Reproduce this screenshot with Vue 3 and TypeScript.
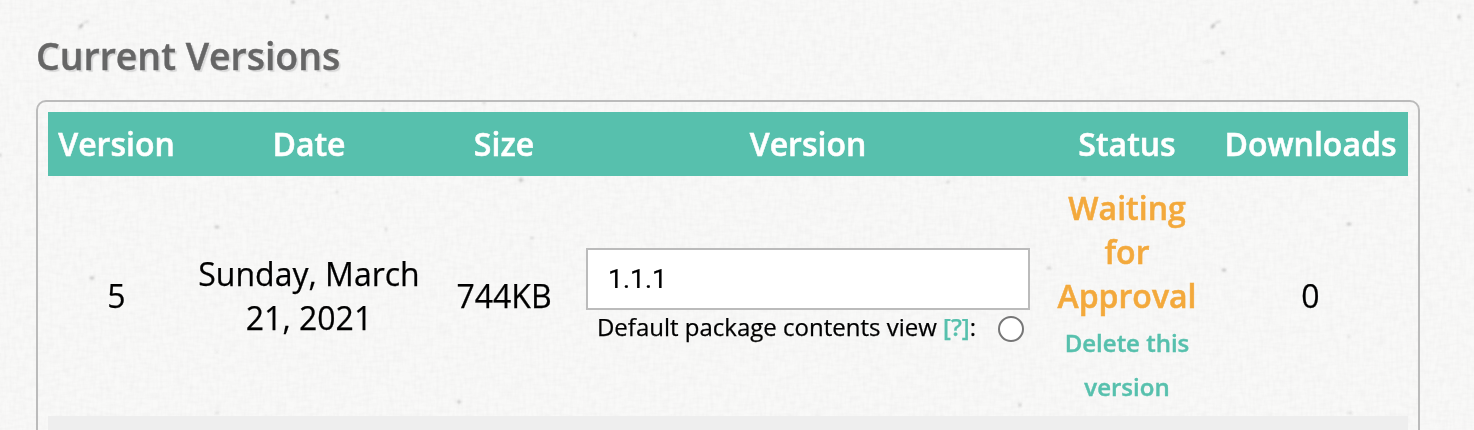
<script setup lang="ts">
interface VersionRow {
  id: number
  date: string
  size: string
  label: string
  status: string
  downloads: number
}

interface Speck {
  x: number
  y: number
  rx: number
  ry: number
  angle: number
  opacity: number
}

const columns: string[] = ['Version', 'Date', 'Size', 'Version', 'Status', 'Downloads']

const rows: VersionRow[] = [
  { id: 5, date: 'Sunday, March 21, 2021', size: '744KB', label: '1.1.1', status: 'Waiting for Approval', downloads: 0 },
]

const specks: Speck[] = [
  { x: 81, y: 26, rx: 3, ry: 1.4, angle: -50, opacity: 0.3 },
  { x: 86, y: 22, rx: 3, ry: 0.9, angle: -20, opacity: 0.18 },
  { x: 293, y: 2, rx: 2, ry: 1.6, angle: 0, opacity: 0.28 },
  { x: 327, y: 17, rx: 1.4, ry: 2.2, angle: 0, opacity: 0.28 },
  { x: 326, y: 85, rx: 1.8, ry: 1.6, angle: 0, opacity: 0.1 },
  { x: 635, y: 35, rx: 1.6, ry: 1.8, angle: 0, opacity: 0.1 },
  { x: 383, y: 110, rx: 1.6, ry: 1.6, angle: 0, opacity: 0.15 },
  { x: 1213, y: 26, rx: 3, ry: 1.4, angle: -50, opacity: 0.3 },
  { x: 1218, y: 22, rx: 3, ry: 0.9, angle: -20, opacity: 0.18 },
  { x: 1223, y: 53, rx: 1.8, ry: 1.8, angle: 0, opacity: 0.28 },
  { x: 1208, y: 62, rx: 6, ry: 0.8, angle: -10, opacity: 0.1 },
  { x: 1416, y: 2, rx: 2, ry: 1.6, angle: 0, opacity: 0.28 },
  { x: 1459, y: 17, rx: 1.4, ry: 2.2, angle: 0, opacity: 0.28 },
  { x: 1458, y: 85, rx: 1.8, ry: 1.6, angle: 0, opacity: 0.1 },
  { x: 0, y: 155, rx: 1.5, ry: 1.8, angle: 0, opacity: 0.2 },
  { x: 521, y: 180, rx: 2, ry: 2, angle: 0, opacity: 0.24 },
  { x: 484, y: 103, rx: 2, ry: 1.4, angle: 0, opacity: 0.12 },
  { x: 337, y: 192, rx: 1.8, ry: 1.8, angle: 0, opacity: 0.1 },
  { x: 217, y: 227, rx: 2.4, ry: 1.4, angle: 0, opacity: 0.24 },
  { x: 386, y: 229, rx: 1.6, ry: 1.6, angle: 0, opacity: 0.14 },
  { x: 532, y: 238, rx: 2, ry: 1.3, angle: 0, opacity: 0.18 },
  { x: 92, y: 278, rx: 2, ry: 1.5, angle: 0, opacity: 0.28 },
  { x: 459, y: 402, rx: 1.9, ry: 1.9, angle: 0, opacity: 0.2 },
  { x: 217, y: 352, rx: 1.6, ry: 1.3, angle: 0, opacity: 0.1 },
  { x: 217, y: 413, rx: 2.6, ry: 1.3, angle: 0, opacity: 0.12 },
  { x: 948, y: 182, rx: 2, ry: 1.5, angle: -30, opacity: 0.15 },
  { x: 1084, y: 179, rx: 2.4, ry: 1.6, angle: 0, opacity: 0.14 },
  { x: 1049, y: 268, rx: 2.4, ry: 1.6, angle: 0, opacity: 0.18 },
  { x: 1020, y: 405, rx: 1.5, ry: 1.9, angle: 0, opacity: 0.18 },
  { x: 1224, y: 270, rx: 2.2, ry: 1.5, angle: 0, opacity: 0.28 },
  { x: 1349, y: 224, rx: 2.6, ry: 1.5, angle: 0, opacity: 0.24 },
  { x: 1349, y: 337, rx: 1.8, ry: 1.3, angle: 0, opacity: 0.1 },
  { x: 1350, y: 413, rx: 2.6, ry: 1.3, angle: 0, opacity: 0.12 },
  { x: 1469, y: 190, rx: 2, ry: 1.6, angle: 0, opacity: 0.12 },
]
</script>

<template>
  <main class="page">
    <svg class="paper" width="1474" height="430" aria-hidden="true">
      <defs>
        <filter id="weave-v" x="0" y="0" width="100%" height="100%" color-interpolation-filters="sRGB">
          <feTurbulence type="fractalNoise" baseFrequency="0.3 0.08" numOctaves="2" seed="4" />
          <feColorMatrix values="0 0 0 0 0.75  0 0 0 0 0.74  0 0 0 0 0.75  0.16 0 0 0 -0.06" />
        </filter>
        <filter id="weave-h" x="0" y="0" width="100%" height="100%" color-interpolation-filters="sRGB">
          <feTurbulence type="fractalNoise" baseFrequency="0.08 0.3" numOctaves="2" seed="9" />
          <feColorMatrix values="0 0 0 0 0.75  0 0 0 0 0.74  0 0 0 0 0.75  0.16 0 0 0 -0.06" />
        </filter>
        <filter id="soft" x="-5%" y="-5%" width="110%" height="110%">
          <feGaussianBlur stdDeviation="0.8" />
        </filter>
      </defs>
      <rect width="1474" height="430" filter="url(#weave-v)" />
      <rect width="1474" height="430" filter="url(#weave-h)" />
      <g filter="url(#soft)" fill="#555">
        <ellipse
          v-for="(s, i) in specks"
          :key="i"
          :cx="s.x"
          :cy="s.y"
          :rx="s.rx"
          :ry="s.ry"
          :opacity="s.opacity * 1.2"
          :transform="`rotate(${s.angle} ${s.x} ${s.y})`"
        />
      </g>
    </svg>

    <h2 class="title">Current Versions</h2>

    <section class="panel">
      <table class="versions">
        <colgroup>
          <col class="c-id" />
          <col class="c-date" />
          <col class="c-size" />
          <col class="c-label" />
          <col class="c-status" />
          <col class="c-downloads" />
        </colgroup>
        <thead>
          <tr>
            <th v-for="(c, i) in columns" :key="i">{{ c }}</th>
          </tr>
        </thead>
        <tbody>
          <tr v-for="row in rows" :key="row.id">
            <td>{{ row.id }}</td>
            <td class="date">{{ row.date }}</td>
            <td>{{ row.size }}</td>
            <td class="edit">
              <input class="label-input" type="text" :value="row.label" />
              <div class="default-view">
                <span>Default package contents view <a class="help">[?]</a>:</span>
                <input class="radio" type="radio" name="default-view" />
              </div>
            </td>
            <td class="status">
              <strong class="waiting">{{ row.status }}</strong>
              <a class="delete">Delete this version</a>
            </td>
            <td>{{ row.downloads }}</td>
          </tr>
          <tr class="alt">
            <td colspan="6"></td>
          </tr>
        </tbody>
      </table>
    </section>
  </main>
</template>

<style>
body {
  margin: 0;
  overflow: hidden;
}
</style>

<style scoped>
.page {
  position: relative;
  box-sizing: border-box;
  width: 1474px;
  height: 430px;
  padding: 29px 54px 0 36px;
  overflow: hidden;
  background: #f9f9f8;
  color: #000;
  font-family: "Open Sans", "Noto Sans", sans-serif;
  font-size: 32px;
  line-height: 44px;
  -webkit-text-stroke: 0.25px currentColor;
}
.paper {
  position: absolute;
  inset: 0;
}
.title {
  position: relative;
  height: 54px;
  margin: 0 0 17px;
  color: #666;
  font-size: 37.44px;
  font-weight: 600;
  line-height: 54px;
  text-shadow: 2px 2px 1px #d8d8d8;
  -webkit-text-stroke-width: 0.4px;
}
.panel {
  position: relative;
  box-sizing: border-box;
  height: 400px;
  padding: 10px;
  border: 2px solid #bbb;
  border-radius: 10px;
}
.versions {
  width: 1360px;
  border-collapse: collapse;
  table-layout: fixed;
  text-align: center;
}
.c-id { width: 137px; }
.c-date { width: 248px; }
.c-size { width: 142px; }
.c-label { width: 466px; }
.c-status { width: 172px; }
.c-downloads { width: 195px; }
th {
  padding: 10px 0;
  background: #57c0ad;
  color: #fff;
  font-weight: 600;
  -webkit-text-stroke-width: 0.5px;
}
td {
  padding: 10px 0;
  vertical-align: middle;
}
.date {
  padding: 10px 12px;
}
.label-input {
  display: block;
  box-sizing: border-box;
  width: 444px;
  height: 62px;
  margin: 0 auto;
  padding: 0 20px 1px;
  border: 2px solid #bbb;
  background: #fff;
  color: #000;
  font-family: Roboto, Arial, sans-serif;
  font-size: 26.67px;
  -webkit-text-stroke: 0.2px currentColor;
}
.default-view {
  display: flex;
  align-items: center;
  justify-content: center;
  gap: 22px;
  height: 34px;
  padding-left: 5px;
  font-size: 24px;
  line-height: 34px;
}
.help {
  color: #57c0ad;
  font-weight: 600;
}
.radio {
  appearance: none;
  box-sizing: border-box;
  width: 26px;
  height: 26px;
  margin: 3px 0 0;
  border: 2px solid #767676;
  border-radius: 50%;
  background: #fff;
}
.status {
  padding: 13px 16px 7px;
}
.waiting {
  display: block;
  margin: -3px 0 3px;
  color: #f3a93c;
  font-weight: 600;
  -webkit-text-stroke-width: 0.5px;
}
.delete {
  display: block;
  color: #57c0ad;
  font-size: 24px;
  font-weight: 600;
  -webkit-text-stroke-width: 0.4px;
}
.alt td {
  height: 44px;
  background: #eee;
}
</style>
